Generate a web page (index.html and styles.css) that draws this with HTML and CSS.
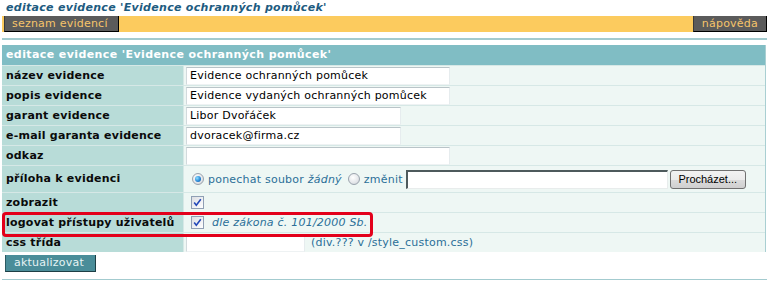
FILE: index.html
```html
<!DOCTYPE html>
<html lang="cs">
<head>
<meta charset="utf-8">
<title>editace evidence</title>
<link rel="stylesheet" href="styles.css">
</head>
<body>
<div class="page">
  <div class="title">editace evidence 'Evidence ochranných pomůcek'</div>
  <div class="toolbar">
    <span class="tbtn">seznam evidencí</span>
    <span class="tbtn help">nápověda</span>
  </div>
  <div class="rule top"></div>
  <div class="form">
    <div class="head">editace evidence 'Evidence ochranných pomůcek'</div>

    <div class="lbl">název evidence</div>
    <div class="val"><input class="txt w-long" type="text" value="Evidence ochranných pomůcek"></div>

    <div class="lbl">popis evidence</div>
    <div class="val"><input class="txt w-long" type="text" value="Evidence vydaných ochranných pomůcek"></div>

    <div class="lbl">garant evidence</div>
    <div class="val"><input class="txt w-mid" type="text" value="Libor Dvořáček"></div>

    <div class="lbl">e-mail garanta evidence</div>
    <div class="val"><input class="txt w-mid" type="text" value="dvoracek@firma.cz"></div>

    <div class="lbl">odkaz</div>
    <div class="val"><input class="txt w-long" type="text" value=""></div>

    <div class="lbl tall">příloha k evidenci</div>
    <div class="val tall">
      <span class="radio on"><span class="dot"></span></span>
      <span class="note">ponechat soubor <i>žádný</i></span>
      <span class="radio second"></span>
      <span class="note">změnit</span>
      <span class="file"></span>
      <span class="browse">Procházet...</span>
    </div>

    <div class="lbl">zobrazit</div>
    <div class="val">
      <span class="check"><svg viewBox="0 0 13 13" width="13" height="13"><path d="M3.2 6.6 L5.3 9.2 L9.8 3.2" fill="none" stroke="#2348b8" stroke-width="1.6"/></svg></span>
    </div>

    <div class="lbl">logovat přístupy uživatelů</div>
    <div class="val">
      <span class="check"><svg viewBox="0 0 13 13" width="13" height="13"><path d="M3.2 6.6 L5.3 9.2 L9.8 3.2" fill="none" stroke="#2348b8" stroke-width="1.6"/></svg></span>
      <span class="note law"><i>dle zákona č. 101/2000 Sb.</i></span>
    </div>

    <div class="lbl">css třída</div>
    <div class="val">
      <input class="txt w-short" type="text" value="">
      <span class="note css">(div.??? v /style_custom.css)</span>
    </div>
  </div>
  <div class="submit-row"><span class="sbtn">aktualizovat</span></div>
  <div class="rule bottom"></div>
  <div class="mark"></div>
</div>
</body>
</html>
```

FILE: styles.css
```css
html, body {
  margin: 0;
  padding: 0;
  background: #ffffff;
}

body {
  font-family: "DejaVu Sans", Verdana, sans-serif;
  font-size: 11px;
  letter-spacing: 0.22px;
  color: #000;
}

.page {
  position: relative;
  width: 765px;
  margin-left: 2px;
}

.title {
  height: 16px;
  line-height: 16px;
  padding-left: 4px;
  font-weight: bold;
  font-style: italic;
  font-size: 11px;
  letter-spacing: 0.3px;
  color: #1d5b80;
}

.toolbar {
  display: flex;
  justify-content: space-between;
  height: 16px;
  background: #fccb5e;
  padding-left: 2px;
}

.tbtn {
  display: block;
  box-sizing: border-box;
  height: 16px;
  line-height: 15px;
  padding: 0 10px 0 7px;
  background: #5b5b5b;
  color: #f6c46a;
  border-right: 1px solid #000;
  border-bottom: 1px solid #000;
  border-left: 1px solid #3a3a3a;
}

.tbtn.help {
  padding: 0 8px 0 8px;
}

.rule {
  height: 2px;
  background: #a3cbcf;
}

.rule.top {
  margin-top: 6px;
}

.rule.bottom {
  margin-top: 7px;
  height: 1px;
}

.form {
  margin-top: 5px;
  width: 764px;
  display: grid;
  grid-template-columns: 181px 1fr;
  column-gap: 1px;
  row-gap: 1px;
  background: #d6e8e6;
  border-right: 1px solid #a9cfd2;
  box-sizing: border-box;
}

.head {
  grid-column: 1 / 3;
  height: 20px;
  line-height: 20px;
  padding-left: 4px;
  background: #80bdc4;
  color: #ffffff;
  font-weight: bold;
  letter-spacing: 0.4px;
}

.lbl {
  height: 19px;
  line-height: 19px;
  padding-left: 4px;
  background: #b8dcd8;
  font-weight: bold;
  color: #0a0a0a;
  white-space: nowrap;
}

.val {
  height: 19px;
  display: flex;
  align-items: center;
  padding-left: 2px;
  background: #eef7f4;
}

.lbl.tall, .val.tall {
  height: 26px;
}

.lbl.tall {
  line-height: 26px;
}

.txt {
  box-sizing: border-box;
  height: 18px;
  margin: 0;
  padding: 0 3px;
  font: 11px "DejaVu Sans", Verdana, sans-serif;
  letter-spacing: 0.22px;
  color: #000;
  background: #fff;
  border: 1px solid;
  border-color: #b9c4c8 #e6ecee #eef2f3 #d2dadd;
  outline: none;
}

.w-long { width: 264px; }
.w-mid { width: 215px; }
.w-short { width: 119px; }

.note {
  color: #2b6f98;
  white-space: nowrap;
}

.note.law {
  margin-left: 8px;
}

.note.css {
  margin-left: 6px;
}

.radio {
  box-sizing: border-box;
  width: 12px;
  height: 12px;
  border-radius: 50%;
  border: 1px solid #9aa3ad;
  background: radial-gradient(circle at 40% 35%, #ffffff 0%, #e4e6ea 60%, #c9ccd2 100%);
  margin-left: 6px;
  margin-right: 4px;
  display: flex;
  align-items: center;
  justify-content: center;
}

.radio.second {
  margin-left: 6px;
}

.radio .dot {
  width: 6px;
  height: 6px;
  border-radius: 50%;
  background: radial-gradient(circle at 35% 35%, #8fe0ff 0%, #2a8ad8 55%, #0b4f9a 100%);
}

.file {
  box-sizing: border-box;
  width: 262px;
  height: 19px;
  margin-left: 3px;
  background: #fff;
  border-style: solid;
  border-width: 2px 1px 1px 2px;
  border-color: #4e5a5c #e8ecec #e8ecec #4e5a5c;
}

.browse {
  box-sizing: border-box;
  height: 19px;
  width: 76px;
  margin-left: 2px;
  line-height: 17px;
  text-align: center;
  font-family: "Liberation Sans", Arial, sans-serif;
  font-size: 11px;
  letter-spacing: 0;
  color: #000;
  border: 1px solid #707070;
  border-radius: 3px;
  background: linear-gradient(#f2f2f2 0%, #ebebeb 50%, #dcdcdc 51%, #cfcfcf 100%);
}

.check {
  box-sizing: border-box;
  width: 13px;
  height: 13px;
  margin-left: 5px;
  border: 1px solid #8f9fb4;
  background: linear-gradient(135deg, #dcdee3 0%, #f4f5f7 70%, #ffffff 100%);
  display: flex;
  align-items: center;
  justify-content: center;
}

.check svg {
  display: block;
  flex: none;
}

.submit-row {
  padding-top: 3px;
  padding-left: 3px;
}

.sbtn {
  display: inline-block;
  box-sizing: border-box;
  height: 17px;
  line-height: 16px;
  padding: 0 11px 0 8px;
  background: #4a8d99;
  color: #e6f3f4;
  border-right: 1px solid #1d3f45;
  border-bottom: 1px solid #1d3f45;
  border-left: 1px solid #2c5a62;
}

.mark {
  position: absolute;
  left: 0;
  top: 212px;
  width: 371px;
  height: 25px;
  box-sizing: border-box;
  border: 3px solid #e3001b;
  border-radius: 4px;
  pointer-events: none;
}
```
